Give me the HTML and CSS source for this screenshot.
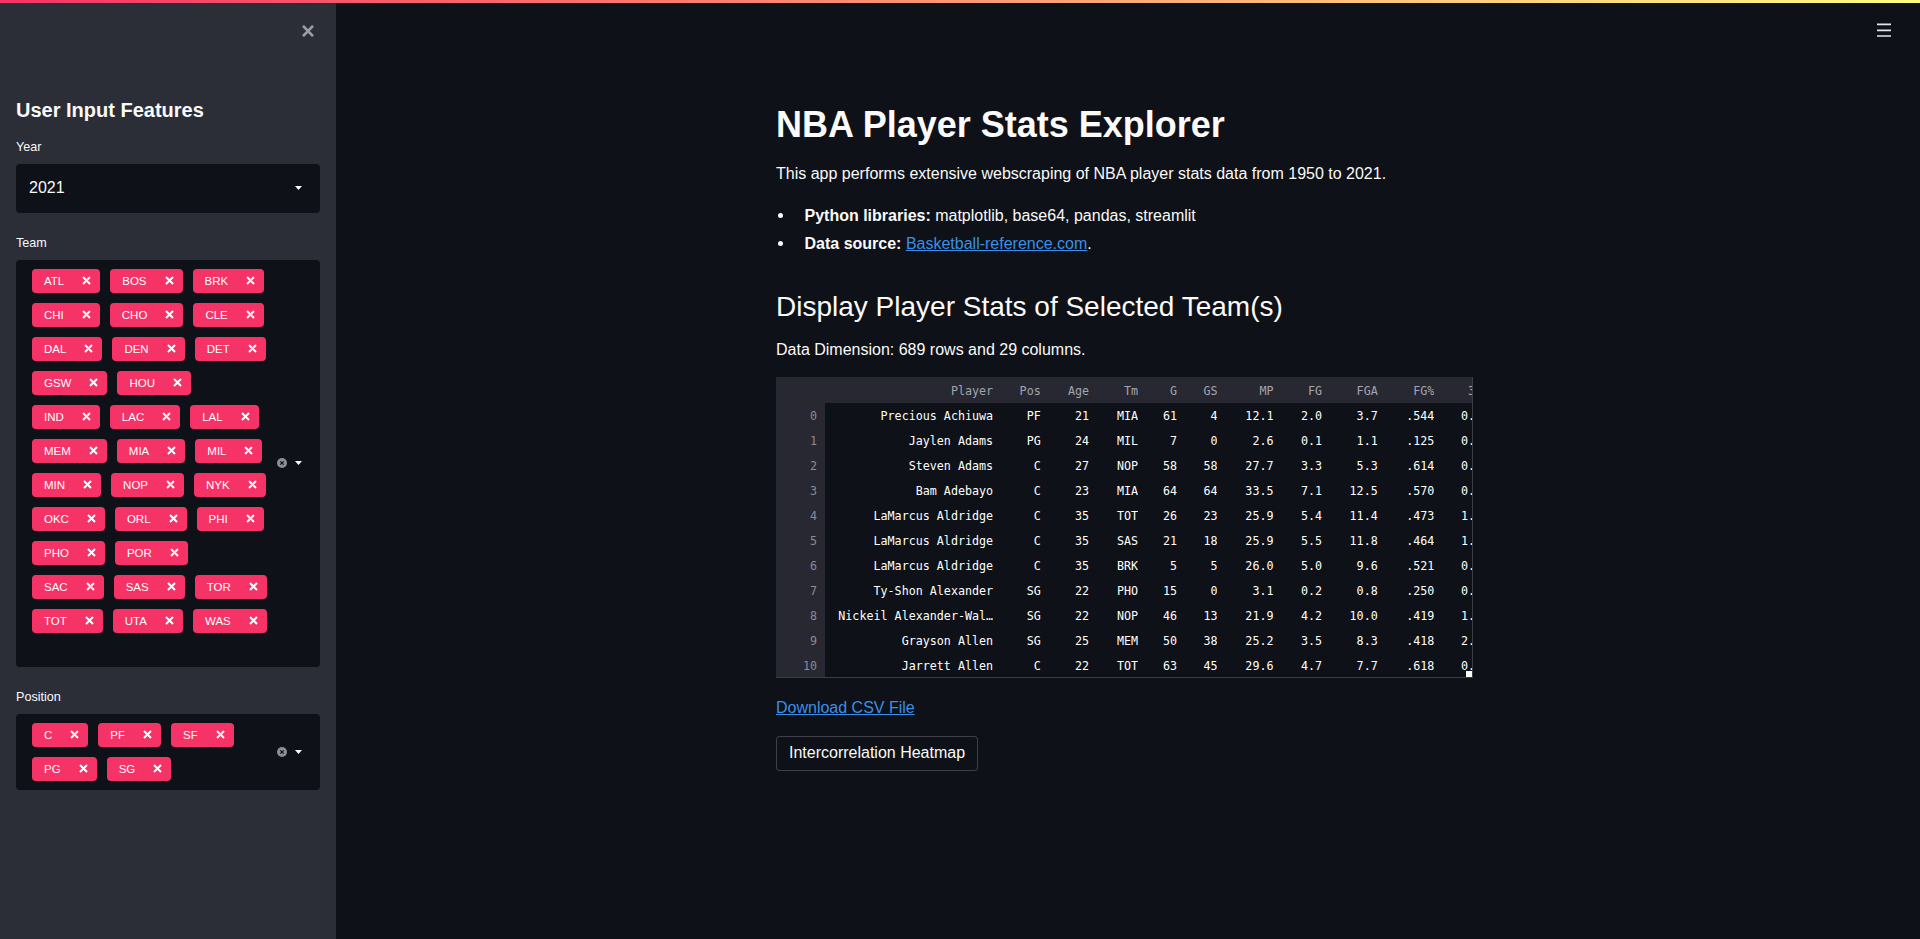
FILE: index.html
```html
<!DOCTYPE html>
<html lang="en">
<head>
<meta charset="utf-8">
<title>NBA Player Stats Explorer</title>
<link rel="stylesheet" href="styles.css">
</head>
<body>
<div class="decoration"></div>
<div class="app">
  <aside class="sidebar">
    <div class="sidebar-top">
      <svg class="close-icon" viewBox="0 0 14 12" width="14" height="12"><path d="M2 0.8 L12 11.2 M12 0.8 L2 11.2" stroke="#9c9da6" stroke-width="2.6" fill="none"/></svg>
    </div>
    <h2 class="sb-title">User Input Features</h2>

    <div class="field-label first">Year</div>
    <div class="select">
      <span class="select-value">2021</span>
      <svg class="caret" viewBox="0 0 7 4" width="7" height="4"><path d="M0 0 H7 L3.5 4 Z" fill="#fafafa"/></svg>
    </div>

    <div class="field-label">Team</div>
    <div class="multiselect">
      <div class="tag-list">
        <div class="tag-row">
          <span class="tag">ATL<svg class="tag-x" viewBox="0 0 9 9"><path d="M1 1 L8 8 M8 1 L1 8"/></svg></span>
          <span class="tag">BOS<svg class="tag-x" viewBox="0 0 9 9"><path d="M1 1 L8 8 M8 1 L1 8"/></svg></span>
          <span class="tag">BRK<svg class="tag-x" viewBox="0 0 9 9"><path d="M1 1 L8 8 M8 1 L1 8"/></svg></span>
        </div>
        <div class="tag-row">
          <span class="tag">CHI<svg class="tag-x" viewBox="0 0 9 9"><path d="M1 1 L8 8 M8 1 L1 8"/></svg></span>
          <span class="tag">CHO<svg class="tag-x" viewBox="0 0 9 9"><path d="M1 1 L8 8 M8 1 L1 8"/></svg></span>
          <span class="tag">CLE<svg class="tag-x" viewBox="0 0 9 9"><path d="M1 1 L8 8 M8 1 L1 8"/></svg></span>
        </div>
        <div class="tag-row">
          <span class="tag">DAL<svg class="tag-x" viewBox="0 0 9 9"><path d="M1 1 L8 8 M8 1 L1 8"/></svg></span>
          <span class="tag">DEN<svg class="tag-x" viewBox="0 0 9 9"><path d="M1 1 L8 8 M8 1 L1 8"/></svg></span>
          <span class="tag">DET<svg class="tag-x" viewBox="0 0 9 9"><path d="M1 1 L8 8 M8 1 L1 8"/></svg></span>
        </div>
        <div class="tag-row">
          <span class="tag">GSW<svg class="tag-x" viewBox="0 0 9 9"><path d="M1 1 L8 8 M8 1 L1 8"/></svg></span>
          <span class="tag">HOU<svg class="tag-x" viewBox="0 0 9 9"><path d="M1 1 L8 8 M8 1 L1 8"/></svg></span>
        </div>
        <div class="tag-row">
          <span class="tag">IND<svg class="tag-x" viewBox="0 0 9 9"><path d="M1 1 L8 8 M8 1 L1 8"/></svg></span>
          <span class="tag">LAC<svg class="tag-x" viewBox="0 0 9 9"><path d="M1 1 L8 8 M8 1 L1 8"/></svg></span>
          <span class="tag">LAL<svg class="tag-x" viewBox="0 0 9 9"><path d="M1 1 L8 8 M8 1 L1 8"/></svg></span>
        </div>
        <div class="tag-row">
          <span class="tag">MEM<svg class="tag-x" viewBox="0 0 9 9"><path d="M1 1 L8 8 M8 1 L1 8"/></svg></span>
          <span class="tag">MIA<svg class="tag-x" viewBox="0 0 9 9"><path d="M1 1 L8 8 M8 1 L1 8"/></svg></span>
          <span class="tag">MIL<svg class="tag-x" viewBox="0 0 9 9"><path d="M1 1 L8 8 M8 1 L1 8"/></svg></span>
        </div>
        <div class="tag-row">
          <span class="tag">MIN<svg class="tag-x" viewBox="0 0 9 9"><path d="M1 1 L8 8 M8 1 L1 8"/></svg></span>
          <span class="tag">NOP<svg class="tag-x" viewBox="0 0 9 9"><path d="M1 1 L8 8 M8 1 L1 8"/></svg></span>
          <span class="tag">NYK<svg class="tag-x" viewBox="0 0 9 9"><path d="M1 1 L8 8 M8 1 L1 8"/></svg></span>
        </div>
        <div class="tag-row">
          <span class="tag">OKC<svg class="tag-x" viewBox="0 0 9 9"><path d="M1 1 L8 8 M8 1 L1 8"/></svg></span>
          <span class="tag">ORL<svg class="tag-x" viewBox="0 0 9 9"><path d="M1 1 L8 8 M8 1 L1 8"/></svg></span>
          <span class="tag">PHI<svg class="tag-x" viewBox="0 0 9 9"><path d="M1 1 L8 8 M8 1 L1 8"/></svg></span>
        </div>
        <div class="tag-row">
          <span class="tag">PHO<svg class="tag-x" viewBox="0 0 9 9"><path d="M1 1 L8 8 M8 1 L1 8"/></svg></span>
          <span class="tag">POR<svg class="tag-x" viewBox="0 0 9 9"><path d="M1 1 L8 8 M8 1 L1 8"/></svg></span>
        </div>
        <div class="tag-row">
          <span class="tag">SAC<svg class="tag-x" viewBox="0 0 9 9"><path d="M1 1 L8 8 M8 1 L1 8"/></svg></span>
          <span class="tag">SAS<svg class="tag-x" viewBox="0 0 9 9"><path d="M1 1 L8 8 M8 1 L1 8"/></svg></span>
          <span class="tag">TOR<svg class="tag-x" viewBox="0 0 9 9"><path d="M1 1 L8 8 M8 1 L1 8"/></svg></span>
        </div>
        <div class="tag-row">
          <span class="tag">TOT<svg class="tag-x" viewBox="0 0 9 9"><path d="M1 1 L8 8 M8 1 L1 8"/></svg></span>
          <span class="tag">UTA<svg class="tag-x" viewBox="0 0 9 9"><path d="M1 1 L8 8 M8 1 L1 8"/></svg></span>
          <span class="tag">WAS<svg class="tag-x" viewBox="0 0 9 9"><path d="M1 1 L8 8 M8 1 L1 8"/></svg></span>
        </div>
        <div class="tag-row input-row"></div>
      </div>
      <div class="ms-controls">
        <svg class="clear-icon" viewBox="0 0 10 10" width="10" height="10"><circle cx="5" cy="5" r="5" fill="#8b8d97"/><path d="M3.3 3.3 L6.7 6.7 M6.7 3.3 L3.3 6.7" stroke="#0e1117" stroke-width="1.2"/></svg>
        <svg class="caret" viewBox="0 0 7 4" width="7" height="4"><path d="M0 0 H7 L3.5 4 Z" fill="#fafafa"/></svg>
      </div>
    </div>

    <div class="field-label">Position</div>
    <div class="multiselect">
      <div class="tag-list padded">
        <div class="tag-row">
          <span class="tag">C<svg class="tag-x" viewBox="0 0 9 9"><path d="M1 1 L8 8 M8 1 L1 8"/></svg></span>
          <span class="tag">PF<svg class="tag-x" viewBox="0 0 9 9"><path d="M1 1 L8 8 M8 1 L1 8"/></svg></span>
          <span class="tag">SF<svg class="tag-x" viewBox="0 0 9 9"><path d="M1 1 L8 8 M8 1 L1 8"/></svg></span>
        </div>
        <div class="tag-row">
          <span class="tag">PG<svg class="tag-x" viewBox="0 0 9 9"><path d="M1 1 L8 8 M8 1 L1 8"/></svg></span>
          <span class="tag">SG<svg class="tag-x" viewBox="0 0 9 9"><path d="M1 1 L8 8 M8 1 L1 8"/></svg></span>
        </div>
      </div>
      <div class="ms-controls">
        <svg class="clear-icon" viewBox="0 0 10 10" width="10" height="10"><circle cx="5" cy="5" r="5" fill="#8b8d97"/><path d="M3.3 3.3 L6.7 6.7 M6.7 3.3 L3.3 6.7" stroke="#0e1117" stroke-width="1.2"/></svg>
        <svg class="caret" viewBox="0 0 7 4" width="7" height="4"><path d="M0 0 H7 L3.5 4 Z" fill="#fafafa"/></svg>
      </div>
    </div>
  </aside>

  <main class="main">
    <div class="main-header">
      <svg class="menu-icon" viewBox="0 0 14 14" width="14" height="14"><path d="M0 1.3 H14 M0 7.3 H14 M0 13 H14" stroke="#e6e6e9" stroke-width="1.7"/></svg>
    </div>
    <div class="content">
      <h1 class="title">NBA Player Stats Explorer</h1>
      <p class="text lead">This app performs extensive webscraping of NBA player stats data from 1950 to 2021.</p>
      <ul class="bullets">
        <li><span><strong>Python libraries:</strong> matplotlib, base64, pandas, streamlit</span></li>
        <li><span><strong>Data source:</strong> <a class="link" href="#">Basketball-reference.com</a>.</span></li>
      </ul>
      <h2 class="subtitle">Display Player Stats of Selected Team(s)</h2>
      <p class="text dim">Data Dimension: 689 rows and 29 columns.</p>

      <div class="df">
        <table class="df-table">
          <colgroup>
            <col class="w-idx"><col class="w-player"><col class="w-pos"><col class="w-age"><col class="w-tm"><col class="w-g"><col class="w-gs"><col class="w-mp"><col class="w-fg"><col class="w-fga"><col class="w-fgp"><col class="w-3p">
          </colgroup>
          <thead>
            <tr><th class="idx"></th><th>Player</th><th>Pos</th><th>Age</th><th>Tm</th><th>G</th><th>GS</th><th>MP</th><th>FG</th><th>FGA</th><th>FG%</th><th>3P</th></tr>
          </thead>
          <tbody>
            <tr><td class="idx">0</td><td>Precious Achiuwa</td><td>PF</td><td>21</td><td>MIA</td><td>61</td><td>4</td><td>12.1</td><td>2.0</td><td>3.7</td><td>.544</td><td>0.0</td></tr>
            <tr><td class="idx">1</td><td>Jaylen Adams</td><td>PG</td><td>24</td><td>MIL</td><td>7</td><td>0</td><td>2.6</td><td>0.1</td><td>1.1</td><td>.125</td><td>0.0</td></tr>
            <tr><td class="idx">2</td><td>Steven Adams</td><td>C</td><td>27</td><td>NOP</td><td>58</td><td>58</td><td>27.7</td><td>3.3</td><td>5.3</td><td>.614</td><td>0.0</td></tr>
            <tr><td class="idx">3</td><td>Bam Adebayo</td><td>C</td><td>23</td><td>MIA</td><td>64</td><td>64</td><td>33.5</td><td>7.1</td><td>12.5</td><td>.570</td><td>0.0</td></tr>
            <tr><td class="idx">4</td><td>LaMarcus Aldridge</td><td>C</td><td>35</td><td>TOT</td><td>26</td><td>23</td><td>25.9</td><td>5.4</td><td>11.4</td><td>.473</td><td>1.2</td></tr>
            <tr><td class="idx">5</td><td>LaMarcus Aldridge</td><td>C</td><td>35</td><td>SAS</td><td>21</td><td>18</td><td>25.9</td><td>5.5</td><td>11.8</td><td>.464</td><td>1.2</td></tr>
            <tr><td class="idx">6</td><td>LaMarcus Aldridge</td><td>C</td><td>35</td><td>BRK</td><td>5</td><td>5</td><td>26.0</td><td>5.0</td><td>9.6</td><td>.521</td><td>0.8</td></tr>
            <tr><td class="idx">7</td><td>Ty-Shon Alexander</td><td>SG</td><td>22</td><td>PHO</td><td>15</td><td>0</td><td>3.1</td><td>0.2</td><td>0.8</td><td>.250</td><td>0.1</td></tr>
            <tr><td class="idx">8</td><td>Nickeil Alexander-Wal…</td><td>SG</td><td>22</td><td>NOP</td><td>46</td><td>13</td><td>21.9</td><td>4.2</td><td>10.0</td><td>.419</td><td>1.7</td></tr>
            <tr><td class="idx">9</td><td>Grayson Allen</td><td>SG</td><td>25</td><td>MEM</td><td>50</td><td>38</td><td>25.2</td><td>3.5</td><td>8.3</td><td>.418</td><td>2.1</td></tr>
            <tr><td class="idx">10</td><td>Jarrett Allen</td><td>C</td><td>22</td><td>TOT</td><td>63</td><td>45</td><td>29.6</td><td>4.7</td><td>7.7</td><td>.618</td><td>0.0</td></tr>
          </tbody>
        </table>
        <span class="df-handle"></span>
      </div>

      <p class="text download"><a class="link" href="#">Download CSV File</a></p>
      <div class="btn-row"><button class="btn" type="button">Intercorrelation Heatmap</button></div>
    </div>
  </main>
</div>
</body>
</html>
```

FILE: styles.css
```css
* { box-sizing: border-box; }

html, body {
  margin: 0;
  height: 100%;
}

body {
  background: #0e1117;
  color: #fafafa;
  font-family: "Liberation Sans", Arial, sans-serif;
  overflow: hidden;
}

.decoration {
  height: 3px;
  background: linear-gradient(90deg, #f63366, #fffd80);
}

.app {
  display: flex;
  height: calc(100% - 3px);
}

/* ---------- sidebar ---------- */
.sidebar {
  width: 336px;
  flex: none;
  background: #2b2d37;
  padding: 0 16px;
}

.sidebar-top {
  display: flex;
  justify-content: flex-end;
  padding: 22px 5px 0 0;
}

.close-icon { display: block; }

.sb-title {
  margin: 61px 0 0;
  font-size: 20px;
  line-height: 24px;
  font-weight: 700;
}

.field-label {
  margin-top: 20px;
  margin-bottom: 7px;
  font-size: 12.6px;
  line-height: 20px;
}

.field-label.first { margin-top: 14.5px; }

.select {
  display: flex;
  align-items: center;
  height: 49px;
  padding: 0 18px 0 13px;
  background: #0e1117;
  border-radius: 4px;
  font-size: 16px;
}

.select-value { flex: 1; }

.caret { display: block; }

.multiselect {
  display: flex;
  align-items: center;
  background: #0e1117;
  border-radius: 4px;
  padding-left: 16px;
}

.tag-list {
  flex: 1;
  display: flex;
  flex-direction: column;
  gap: 10px;
  padding-top: 9px;
}

.tag-list.padded { padding-bottom: 9px; }

.tag-row {
  display: flex;
  gap: 10px;
  height: 24px;
}

.tag {
  display: flex;
  align-items: center;
  height: 24px;
  padding: 0 9px 0 12px;
  background: #f63366;
  border-radius: 4px;
  color: #ffffff;
  font-size: 11.5px;
  white-space: nowrap;
}

.tag-x {
  width: 9px;
  height: 9px;
  margin-left: 18px;
  fill: none;
  stroke: #ffffff;
  stroke-width: 2;
}

.ms-controls {
  display: flex;
  align-items: center;
  gap: 8px;
  padding: 0 18px 0 7px;
}

.clear-icon { display: block; }

/* ---------- main ---------- */
.main {
  flex: 1;
  min-width: 0;
  display: flex;
  flex-direction: column;
}

.main-header {
  display: flex;
  justify-content: flex-end;
  padding: 20px 29px 0 0;
}

.menu-icon { display: block; }

.content {
  width: 704px;
  margin: 0 auto;
  padding-top: 66.4px;
}

.title {
  margin: 0;
  font-size: 36px;
  line-height: 43.2px;
  font-weight: 700;
}

.text {
  font-size: 16px;
  line-height: 25.6px;
}

.lead { margin: 14.1px 0 0; }

.bullets {
  margin: 15.4px 0 0;
  padding: 0;
  list-style: none;
}

.bullets li {
  display: flex;
  align-items: center;
  font-size: 16px;
  line-height: 28px;
}

.bullets li::before {
  content: "";
  flex: none;
  width: 5px;
  height: 5px;
  border-radius: 50%;
  background: #fafafa;
  margin: 0 22px 0 1.5px;
}

.link {
  color: #3a8fe8;
  text-decoration: underline;
}

.subtitle {
  margin: 32.5px 0 0;
  font-size: 28px;
  line-height: 33.6px;
  font-weight: 400;
}

.dim { margin: 13px 0 0; }

/* ---------- dataframe ---------- */
.df {
  position: relative;
  margin-top: 14.6px;
  width: 697px;
  height: 301px;
  overflow: hidden;
  border-right: 1px solid #3a3c46;
  border-bottom: 1px solid #3a3c46;
}

.df-table {
  table-layout: fixed;
  width: 706px;
  border-collapse: collapse;
  font-family: "DejaVu Sans Mono", "Liberation Mono", monospace;
  font-size: 11.7px;
}

.w-idx { width: 49px; }
.w-player { width: 168px; }
.w-pos { width: 47.6px; }
.w-age { width: 48.4px; }
.w-tm { width: 49px; }
.w-g { width: 39px; }
.w-gs { width: 40.3px; }
.w-mp { width: 56px; }
.w-fg { width: 48.6px; }
.w-fga { width: 55.6px; }
.w-fgp { width: 56.6px; }
.w-3p { width: 47.5px; }

.df-table thead tr { height: 26px; }
.df-table tbody tr { height: 25px; }

.df-table th,
.df-table td {
  padding: 0;
  text-align: right;
  white-space: nowrap;
  overflow: hidden;
}

.df-table th {
  background: #272831;
  color: #a3a5ae;
  font-weight: 400;
  padding-top: 2px;
}

.df-table td {
  color: #ffffff;
  padding-top: 2px;
}

.df-table .idx {
  background: #272831;
  color: #8a8c96;
  padding-right: 8px;
}

.df-handle {
  position: absolute;
  right: 0;
  bottom: 0;
  width: 6px;
  height: 6px;
  background: #fafafa;
}

.download { margin: 17px 0 0; }

.btn-row {
  display: flex;
  margin-top: 15.4px;
}

.btn {
  height: 35px;
  padding: 0 12px;
  background: #0e1117;
  color: #fafafa;
  border: 1px solid rgba(250, 250, 250, 0.2);
  border-radius: 4px;
  font-family: "Liberation Sans", Arial, sans-serif;
  font-size: 16px;
}
```
